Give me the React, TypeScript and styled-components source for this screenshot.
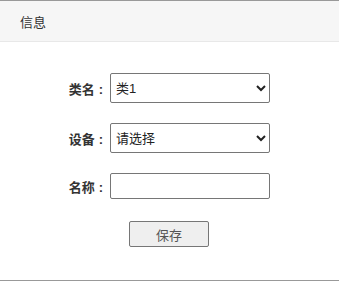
import React from 'react';
import styled, { createGlobalStyle } from 'styled-components';

const GlobalStyle = createGlobalStyle`
  html, body {
    margin: 0;
    padding: 0;
    background: #fff;
  }
  body {
    font-family: "Liberation Sans", "Noto Sans CJK SC", sans-serif;
    font-size: 13px;
    color: #333;
  }
`;

const Panel = styled.div`
  width: 339px;
  height: 281px;
  box-sizing: border-box;
  border-top: 1px solid #999;
  border-bottom: 1px solid #999;
  display: flex;
  flex-direction: column;
`;

const Header = styled.div`
  height: 41px;
  box-sizing: border-box;
  background: #f6f6f6;
  border-bottom: 1px solid #e8e8e8;
  padding-left: 20px;
  display: flex;
  align-items: center;
  font-size: 13px;
  color: #333;
`;

const Form = styled.div`
  display: grid;
  grid-template-columns: 104px 160px;
  column-gap: 6px;
  align-items: center;
  padding-top: 31px;
`;

const Label = styled.label<{ $gap: number }>`
  justify-self: end;
  font-weight: bold;
  font-size: 13px;
  color: #333;
  margin-top: ${({ $gap }) => $gap}px;
  padding-right: 1px;
`;

const Colon = styled.span`
  margin-left: 4px;
`;

const Select = styled.select<{ $gap: number }>`
  width: 160px;
  height: 30px;
  box-sizing: border-box;
  border: 1px solid #767676;
  border-radius: 2px;
  background: #fff;
  color: #222;
  font-family: "Liberation Sans", "Noto Sans CJK SC", sans-serif;
  font-size: 13px;
  padding: 0 1px;
  margin: ${({ $gap }) => $gap}px 0 0 0;
`;

const TextInput = styled.input<{ $gap: number }>`
  width: 160px;
  height: 26px;
  box-sizing: border-box;
  border: 1px solid #767676;
  border-radius: 2px;
  margin: ${({ $gap }) => $gap}px 0 0 0;
  padding: 0 4px;
  font-size: 13px;
`;

const Actions = styled.div`
  display: flex;
  justify-content: center;
  padding-top: 22px;
  padding-right: 1px;
`;

const SaveButton = styled.button`
  width: 80px;
  height: 26px;
  box-sizing: border-box;
  background: #efefef;
  border: 1px solid #767676;
  border-radius: 2px;
  color: #555;
  font-family: "Liberation Sans", "Noto Sans CJK SC", sans-serif;
  font-size: 13px;
`;

export default function App() {
  return (
    <>
      <GlobalStyle />
      <Panel>
        <Header>信息</Header>
        <Form>
          <Label $gap={0}>类名<Colon>:</Colon></Label>
          <Select $gap={0} defaultValue="1">
            <option value="1">类1</option>
            <option value="2">类2</option>
          </Select>
          <Label $gap={20}>设备<Colon>:</Colon></Label>
          <Select $gap={20} defaultValue="">
            <option value="">请选择</option>
          </Select>
          <Label $gap={20}>名称<Colon>:</Colon></Label>
          <TextInput $gap={20} type="text" />
        </Form>
        <Actions>
          <SaveButton>保存</SaveButton>
        </Actions>
      </Panel>
    </>
  );
}
